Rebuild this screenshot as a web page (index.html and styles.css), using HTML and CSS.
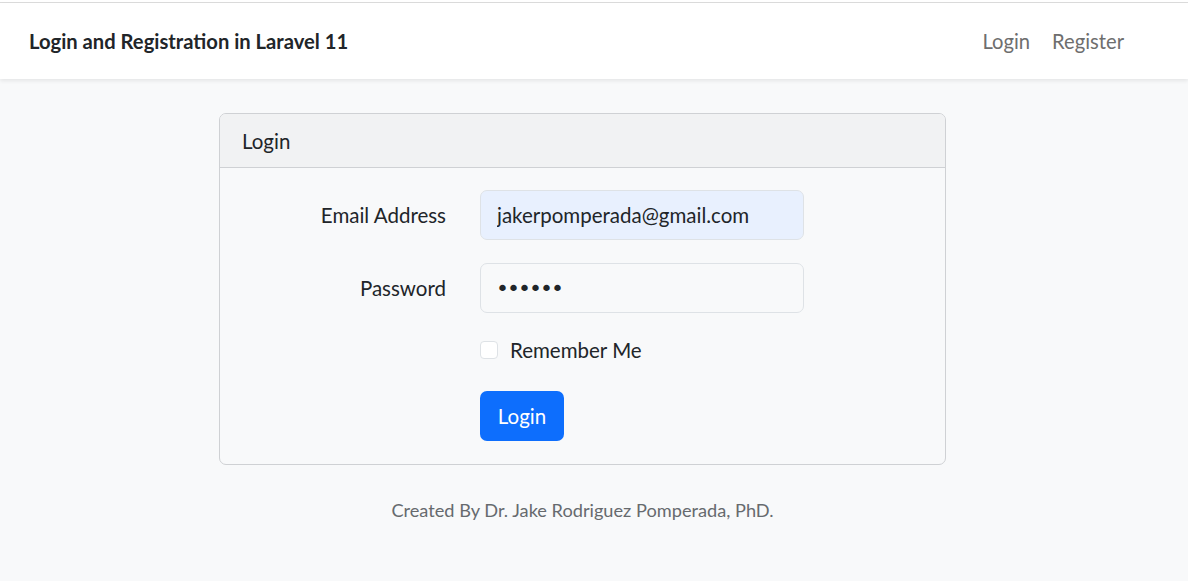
FILE: index.html
```html
<!DOCTYPE html>
<html lang="en">
<head>
<meta charset="utf-8">
<title>Login and Registration in Laravel 11</title>
<link rel="stylesheet" href="styles.css">
</head>
<body>
<div class="topstrip"></div>
<nav class="navbar">
  <a class="brand" href="#">Login and Registration in Laravel 11</a>
  <div class="navlinks">
    <a href="#">Login</a>
    <a href="#">Register</a>
  </div>
</nav>
<main class="main">
  <section class="card">
    <div class="card-header">Login</div>
    <form class="card-body">
      <div class="row">
        <label class="label" for="email">Email Address</label>
        <div class="field"><input id="email" class="input autofill" type="email" value="jakerpomperada@gmail.com"></div>
      </div>
      <div class="row row-pw">
        <label class="label" for="pw">Password</label>
        <div class="field"><input id="pw" class="input" type="password" value="secret"></div>
      </div>
      <div class="row row-check">
        <div class="label"></div>
        <label class="check"><span class="box"></span>Remember Me</label>
      </div>
      <div class="row row-btn">
        <div class="label"></div>
        <button class="btn" type="button">Login</button>
      </div>
    </form>
  </section>
  <p class="footer">Created By Dr. Jake Rodriguez Pomperada, PhD.</p>
</main>
</body>
</html>
```
FILE: styles.css
```css
* { box-sizing: border-box; }
html, body { margin: 0; }
body {
  background: #f8f9fa;
  font-family: "Lato", "Noto Sans", sans-serif;
  font-size: 20.5px;
  color: #212529;
}
.topstrip { height: 3px; background: #fff; border-bottom: 1px solid #dcdcdc; }
.navbar {
  height: 76px;
  background: #fff;
  display: flex;
  align-items: center;
  justify-content: space-between;
  padding: 0 64px 0 29px;
  box-shadow: 0 2px 4px rgba(0,0,0,.08);
  position: relative;
}
.brand { font-weight: 700; color: #212529; text-decoration: none; font-size: 20.2px; }
.navlinks { display: flex; gap: 22px; font-size: 20.2px; }
.navlinks a { color: #6e6e6e; text-decoration: none; }
.main { width: 1165px; padding-top: 34px; display: flex; flex-direction: column; align-items: center; }
.card {
  width: 727px;
  border: 1px solid #cfd1d4;
  border-radius: 7px;
  overflow: hidden;
}
.card-header {
  height: 54px;
  background: #f1f2f3;
  border-bottom: 1px solid #cfd1d4;
  padding: 0 22px;
  display: flex;
  align-items: center;
}
.card-body { padding: 22px 0 23px; display: flex; flex-direction: column; }
.row { display: flex; align-items: center; }
.label { width: 226px; text-align: right; margin-right: 34px; }
.input {
  width: 324px;
  height: 50px;
  border: 1px solid #dee2e6;
  border-radius: 7px;
  background: #f8f9fa;
  padding: 0 16px;
  font: inherit;
  color: #212529;
  outline: none;
}
.input.autofill { background: #e8f0fe; }
.input[type=password] { font-family: "DejaVu Sans", sans-serif; font-size: 22px; letter-spacing: -2px; padding-left: 15px; }
.row-pw { margin-top: 23px; }
.row-check { margin-top: 28px; height: 18px; }
.check { display: flex; align-items: center; gap: 12px; }
.box { width: 18px; height: 18px; border: 1px solid #dee2e6; border-radius: 4px; background: #fff; }
.row-btn { margin-top: 32px; }
.btn {
  width: 84px; height: 50px;
  background: #0d6efd; color: #fff;
  border: 0; border-radius: 7px;
  font: inherit;
}
.footer { margin: 34px 0 0; color: #666a6e; font-size: 18.2px; }
```
